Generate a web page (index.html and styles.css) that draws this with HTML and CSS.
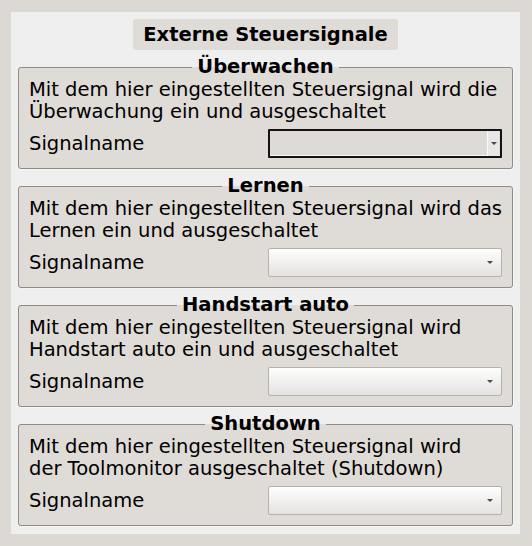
FILE: index.html
```html
<!DOCTYPE html>
<html lang="de">
<head>
<meta charset="utf-8">
<link rel="stylesheet" href="styles.css">
</head>
<body>
<div class="panel">
  <div class="title-row"><div class="title">Externe Steuersignale</div></div>

  <fieldset class="group">
    <legend>Überwachen</legend>
    <p class="desc">Mit dem hier eingestellten Steuersignal wird die<br>Überwachung ein und ausgeschaltet</p>
    <div class="row">
      <span class="label">Signalname</span>
      <div class="combo focus"><span class="btn"><span class="arrow"></span></span></div>
    </div>
  </fieldset>

  <fieldset class="group">
    <legend>Lernen</legend>
    <p class="desc">Mit dem hier eingestellten Steuersignal wird das<br>Lernen ein und ausgeschaltet</p>
    <div class="row">
      <span class="label">Signalname</span>
      <div class="combo"><span class="btn"><span class="arrow"></span></span></div>
    </div>
  </fieldset>

  <fieldset class="group">
    <legend>Handstart auto</legend>
    <p class="desc">Mit dem hier eingestellten Steuersignal wird<br>Handstart auto ein und ausgeschaltet</p>
    <div class="row">
      <span class="label">Signalname</span>
      <div class="combo"><span class="btn"><span class="arrow"></span></span></div>
    </div>
  </fieldset>

  <fieldset class="group">
    <legend>Shutdown</legend>
    <p class="desc">Mit dem hier eingestellten Steuersignal wird<br>der Toolmonitor ausgeschaltet (Shutdown)</p>
    <div class="row">
      <span class="label">Signalname</span>
      <div class="combo"><span class="btn"><span class="arrow"></span></span></div>
    </div>
  </fieldset>
</div>
</body>
</html>
```

FILE: styles.css
```css
* { box-sizing: border-box; }
html, body { margin: 0; padding: 0; }
body {
  background: #dcd9d5;
  font-family: "DejaVu Sans", sans-serif;
  font-size: 19.5px;
  color: #000;
  padding: 12px 12px 12px 11px;
  width: 532px;
  height: 546px;
}
.panel {
  background: #efefef;
  width: 509px;
  height: 522px;
  padding: 7px 7px 7px 7px;
}
.title-row {
  display: flex;
  justify-content: center;
  margin-bottom: 6px;
}
.title {
  background: #dfdbd7;
  border-radius: 3px;
  height: 31px;
  line-height: 31px;
  padding: 0;
  font-weight: bold;
  font-size: 19.5px;
  width: 265px;
  text-align: center;
}
.group {
  margin: 0 0 6px 0;
  padding: 1px 10px 10px 10px;
  border: 1px solid #8e8b88;
  border-radius: 3px;
  background: #dfdbd7;
  box-shadow: 1px 1px 0 #f6f5f4;
  min-width: 0;
}
.group:last-child { margin-bottom: 0; }
.group legend {
  margin: 0 auto;
  padding: 0 5px;
  font-weight: bold;
  font-size: 19.5px;
  line-height: 22px;
  height: 22px;
}
.desc {
  margin: 0;
  line-height: 22px;
  height: 44px;
  white-space: nowrap;
}
.row {
  display: flex;
  align-items: center;
  justify-content: space-between;
  margin-top: 6px;
  height: 29px;
}
.label { line-height: 22px; }
.combo {
  width: 234px;
  height: 29px;
  border: 1px solid #b5b1ad;
  border-radius: 2px;
  background: linear-gradient(#fefefe, #e4e2e0);
  display: flex;
  justify-content: flex-end;
  align-items: center;
  padding-right: 5px;
}
.combo .btn {
  width: 12px;
  height: 100%;
  display: flex;
  align-items: center;
  justify-content: center;
}
.arrow {
  width: 0;
  height: 0;
  border-left: 3px solid transparent;
  border-right: 3px solid transparent;
  border-top: 3px solid #4a4a4a;
}
.combo.focus {
  border: 2px solid #141414;
  border-radius: 1px;
  background: #dedad6;
  box-shadow: inset 0 -1px 0 #f8f8f8;
  padding-right: 0;
}
.combo.focus .btn {
  width: 12px;
  height: 25px;
  margin-right: 1px;
  background: #e9e7e5;
  border-left: 1px solid #fafafa;
}
```
